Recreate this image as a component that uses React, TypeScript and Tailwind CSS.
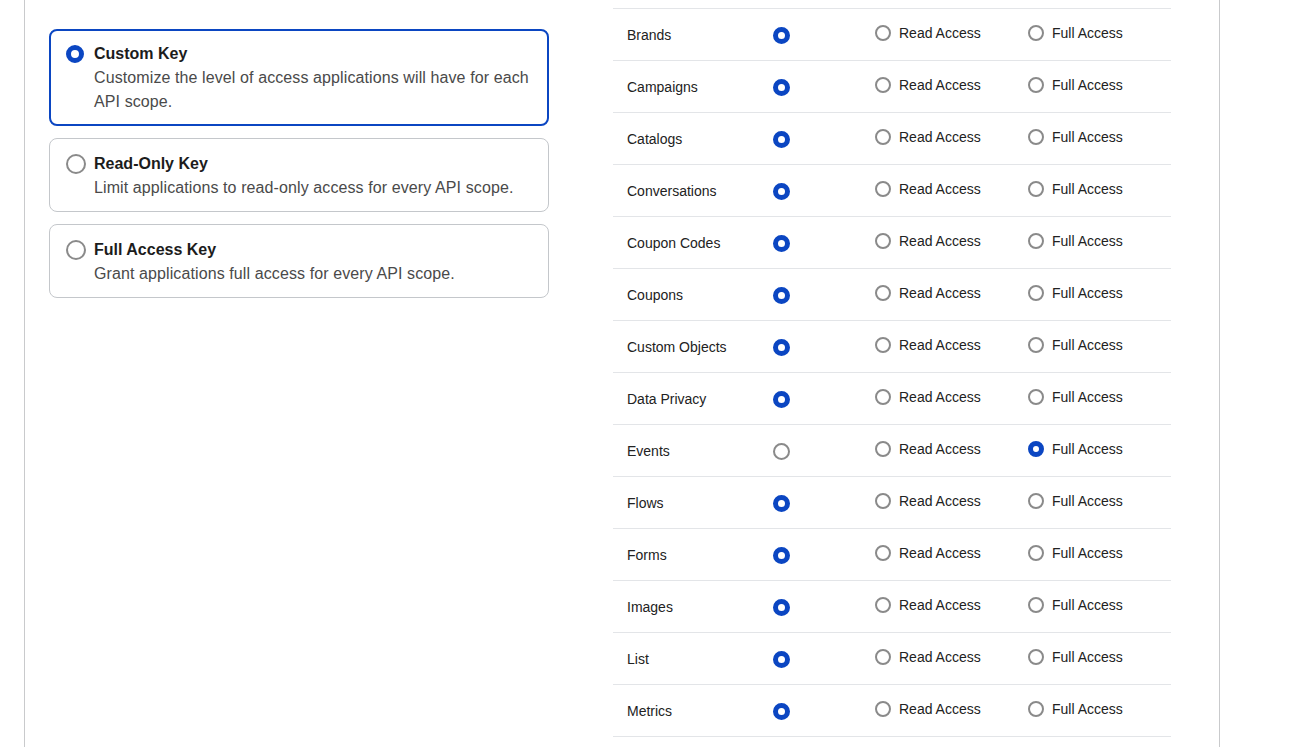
import React from "react";

function Radio({ checked, size = 16, ring = 5 }: { checked: boolean; size?: number; ring?: number }) {
  return checked ? (
    <span
      className="inline-block shrink-0 rounded-full border-[#0b46c2] bg-white box-border"
      style={{ width: size, height: size, borderWidth: ring, borderStyle: "solid" }}
    />
  ) : (
    <span
      className="inline-block shrink-0 rounded-full border-2 border-[#8a8a8a] bg-white box-border"
      style={{ width: size, height: size }}
    />
  );
}

const cards = [
  {
    title: "Custom Key",
    desc: "Customize the level of access applications will have for each API scope.",
    checked: true,
  },
  {
    title: "Read-Only Key",
    desc: "Limit applications to read-only access for every API scope.",
    checked: false,
  },
  {
    title: "Full Access Key",
    desc: "Grant applications full access for every API scope.",
    checked: false,
  },
];

const rows: { name: string; sel: 0 | 1 | 2 }[] = [
  { name: "Brands", sel: 0 },
  { name: "Campaigns", sel: 0 },
  { name: "Catalogs", sel: 0 },
  { name: "Conversations", sel: 0 },
  { name: "Coupon Codes", sel: 0 },
  { name: "Coupons", sel: 0 },
  { name: "Custom Objects", sel: 0 },
  { name: "Data Privacy", sel: 0 },
  { name: "Events", sel: 2 },
  { name: "Flows", sel: 0 },
  { name: "Forms", sel: 0 },
  { name: "Images", sel: 0 },
  { name: "List", sel: 0 },
  { name: "Metrics", sel: 0 },
];

export default function App() {
  return (
    <div
      className="w-[1311px] h-[747px] overflow-hidden bg-white"
      style={{ fontFamily: '"Liberation Sans", Arial, sans-serif' }}
    >
      <div className="ml-[24px] w-[1196px] h-full border-l border-r border-[#c9cacc] flex">
        <div className="pl-[24px] pt-[29px] w-[524px] shrink-0 flex flex-col gap-[12px]">
          {cards.map((c) =>
            c.checked ? (
              <div
                key={c.title}
                className="w-[500px] h-[97px] rounded-[8px] border-2 border-[#0b46c2] pl-[15px] pr-[14px] pt-[11px] flex gap-[10px]"
              >
                <div className="h-[24px] flex items-center">
                  <Radio checked size={18} ring={5} />
                </div>
                <div>
                  <div className="text-[16px] leading-[24px] font-bold text-[#1c1c1c]">{c.title}</div>
                  <div className="text-[16px] leading-[24px] text-[#4a4a4a] tracking-[0.1px]">{c.desc}</div>
                </div>
              </div>
            ) : (
              <div
                key={c.title}
                className="w-[500px] h-[74px] rounded-[8px] border border-[#c4c7cb] pl-[16px] pr-[14px] pt-[13px] flex gap-[8px]"
              >
                <div className="h-[24px] flex items-center">
                  <Radio checked={false} size={20} />
                </div>
                <div>
                  <div className="text-[16px] leading-[24px] font-bold text-[#1c1c1c]">{c.title}</div>
                  <div className="text-[16px] leading-[24px] text-[#4a4a4a] tracking-[0.1px]">{c.desc}</div>
                </div>
              </div>
            )
          )}
        </div>
        <div className="ml-[64px] pt-[8px] w-[558px] shrink-0">
          <div className="border-t border-[#e3e5e8]">
            {rows.map((r) => (
              <div
                key={r.name}
                className="h-[52px] border-b border-[#e3e5e8] flex items-center text-[14px] text-[#222]"
              >
                <div className="w-[160px] pl-[14px] pt-[1px]">{r.name}</div>
                <div className="w-[102px] flex items-center pt-[1px]">
                  <Radio checked={r.sel === 0} size={17} ring={5} />
                </div>
                <div className="w-[153px] flex items-center gap-[8px] pb-[3px]">
                  <Radio checked={r.sel === 1} size={16} />
                  <span>Read Access</span>
                </div>
                <div className="flex items-center gap-[8px] pb-[3px]">
                  <Radio checked={r.sel === 2} size={16} ring={5} />
                  <span>Full Access</span>
                </div>
              </div>
            ))}
          </div>
        </div>
      </div>
    </div>
  );
}
